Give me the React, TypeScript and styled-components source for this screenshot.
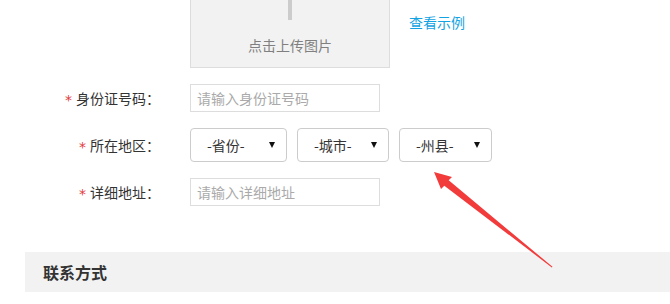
import * as React from 'react';
import styled, {createGlobalStyle} from 'styled-components';

const GlobalStyle = createGlobalStyle`
	html, body {
		margin: 0;
		padding: 0;
		background: #fff;
	}
	body {
		font-family: "Noto Sans CJK SC", "Microsoft YaHei", sans-serif;
		font-size: 14px;
		color: #333;
	}
`;

const Page = styled.div`
	position: relative;
	width: 670px;
	height: 304px;
	overflow: hidden;
`;

// the page is scrolled: the upload box starts above the visible area
const Form = styled.div`
	margin-top: -52px;
	padding-bottom: 30px;
`;

const Row = styled.div<{$top?: boolean}>`
	display: flex;
	align-items: ${p => (p.$top ? 'flex-start' : 'center')};
	margin-bottom: 16px;
`;

const Label = styled.div`
	width: 160px;
	margin-right: 30px;
	text-align: right;
	font-size: 14px;
	line-height: 20px;
	color: #333;
	white-space: nowrap;
`;

const Star = styled.span`
	color: #e4393c;
	margin-right: 4px;
	font-family: "DejaVu Sans", sans-serif;
	font-size: 14px;
	position: relative;
	top: 1px;
`;

const UploadBox = styled.div`
	box-sizing: border-box;
	width: 200px;
	height: 120px;
	border: 1px solid #ddd;
	background: #f2f2f2;
	padding-top: 11px;
	display: flex;
	flex-direction: column;
	align-items: center;
	cursor: pointer;
`;

const Plus = styled.div`
	position: relative;
	width: 40px;
	height: 60px;

	&::before, &::after {
		content: '';
		position: absolute;
		background: #ccc;
	}
	&::before {
		left: 18px;
		top: 0;
		width: 4px;
		height: 60px;
	}
	&::after {
		left: 0;
		top: 18px;
		width: 40px;
		height: 4px;
	}
`;

const UploadText = styled.div`
	margin-top: 15px;
	line-height: 20px;
	font-size: 14px;
	color: #808080;
`;

const SampleLink = styled.a`
	margin-left: 19px;
	margin-top: 64px;
	line-height: 20px;
	font-size: 14px;
	color: #13a3e2;
	text-decoration: none;
	cursor: pointer;
`;

const TextInput = styled.input`
	box-sizing: border-box;
	width: 190px;
	height: 28px;
	margin: 0;
	padding: 0 6px;
	border: 1px solid #ddd;
	border-radius: 0;
	outline: none;
	font-family: inherit;
	font-size: 14px;
	color: #333;

	&::placeholder {
		color: #aaa;
	}
`;

const SelectGroup = styled.div`
	display: flex;
	gap: 10px;
`;

const SelectBox = styled.div<{$width: number}>`
	box-sizing: border-box;
	width: ${p => p.$width}px;
	height: 34px;
	border: 1px solid #ccc;
	border-radius: 4px;
	padding: 0 10px 0 16px;
	display: flex;
	align-items: center;
	justify-content: space-between;
	font-size: 14px;
	color: #333;
	background: #fff;
	cursor: pointer;
`;

const Caret = styled.span`
	width: 0;
	height: 0;
	border-left: 3px solid transparent;
	border-right: 3px solid transparent;
	border-top: 6px solid #111;
	margin-right: 1px;
`;

const SectionHeader = styled.div`
	margin-left: 25px;
	height: 40px;
	padding-left: 18px;
	background: #f2f2f2;
	line-height: 40px;
	font-size: 16px;
	font-weight: bold;
	color: #333;
`;

const ArrowLayer = styled.svg`
	position: absolute;
	left: 0;
	top: 0;
	pointer-events: none;
`;

const regions = [
	{text: '-省份-', width: 97},
	{text: '-城市-', width: 92},
	{text: '-州县-', width: 93}
];

export default function App() {
	return (
		<Page>
			<GlobalStyle />
			<Form>
				<Row $top>
					<Label />
					<UploadBox>
						<Plus />
						<UploadText>点击上传图片</UploadText>
					</UploadBox>
					<SampleLink>查看示例</SampleLink>
				</Row>
				<Row>
					<Label><Star>*</Star>身份证号码：</Label>
					<TextInput placeholder="请输入身份证号码" />
				</Row>
				<Row>
					<Label><Star>*</Star>所在地区：</Label>
					<SelectGroup>
						{regions.map(r => (
							<SelectBox key={r.text} $width={r.width}>
								<span>{r.text}</span>
								<Caret />
							</SelectBox>
						))}
					</SelectGroup>
				</Row>
				<Row>
					<Label><Star>*</Star>详细地址：</Label>
					<TextInput placeholder="请输入详细地址" />
				</Row>
			</Form>
			<SectionHeader>联系方式</SectionHeader>
			<ArrowLayer width="670" height="304" viewBox="0 0 670 304">
				<polygon
					fill="#f23b3b"
					points="434,172 452,177 448.7,180.3 552.5,266.8 551.8,267.4 444.3,185.7 441,189"
				/>
			</ArrowLayer>
		</Page>
	);
}
